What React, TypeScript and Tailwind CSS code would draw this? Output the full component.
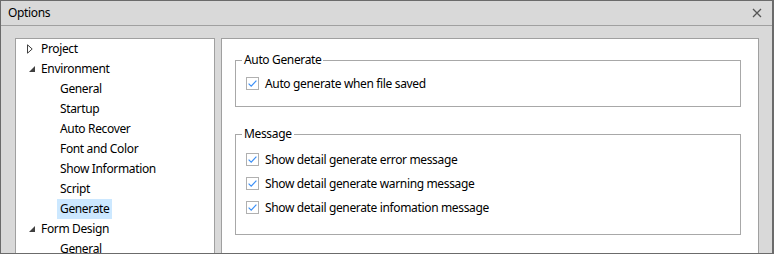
import React from "react";

const tree: { label: string; level: 0 | 1; state?: "collapsed" | "expanded"; selected?: boolean }[] = [
  { label: "Project", level: 0, state: "collapsed" },
  { label: "Environment", level: 0, state: "expanded" },
  { label: "General", level: 1 },
  { label: "Startup", level: 1 },
  { label: "Auto Recover", level: 1 },
  { label: "Font and Color", level: 1 },
  { label: "Show Information", level: 1 },
  { label: "Script", level: 1 },
  { label: "Generate", level: 1, selected: true },
  { label: "Form Design", level: 0, state: "expanded" },
  { label: "General", level: 1 },
  { label: "Layout", level: 1 },
];

function Arrow({ state }: { state: "collapsed" | "expanded" }) {
  if (state === "collapsed") {
    return (
      <svg width="6" height="10" viewBox="0 0 6 10" className="block">
        <path d="M0.5 0.8 L5.2 5 L0.5 9.2 Z" fill="none" stroke="#404040" strokeWidth="1" />
      </svg>
    );
  }
  return (
    <svg width="6" height="6" viewBox="0 0 6 6" className="block">
      <path d="M6 0 L6 6 L0 6 Z" fill="#404040" />
    </svg>
  );
}

function CheckBox() {
  return (
    <span className="w-[13px] h-[13px] shrink-0 border border-[#b0b0b0] bg-white flex items-center justify-center">
      <svg width="11" height="11" viewBox="0 0 11 11" className="block">
        <path d="M1.6 5.6 L4.2 8.2 L9.4 2.6" fill="none" stroke="#3b8ff6" strokeWidth="1.2" />
      </svg>
    </span>
  );
}

function CheckRow({ label }: { label: string }) {
  return (
    <div className="flex items-center h-[13px] pl-[10px]">
      <CheckBox />
      <span className="ml-[6px] leading-[16px] whitespace-nowrap">{label}</span>
    </div>
  );
}

function Group({ title, children, className }: { title: string; children: React.ReactNode; className: string }) {
  return (
    <div className={"relative border border-[#a8a8a8] " + className}>
      <span className="absolute -top-[9px] left-[6px] px-[2px] bg-white leading-[16px] whitespace-nowrap">{title}</span>
      {children}
    </div>
  );
}

export default function App() {
  return (
    <div className="w-[774px] h-[254px] overflow-hidden border-l border-t border-b border-r-2 border-[#6b6b6b] bg-[#d9d9d9] flex flex-col font-['Noto_Sans',sans-serif] text-[12px] tracking-[-0.35px] text-black">
      <div className="h-[25px] shrink-0 border-b border-[#a0a0a0] flex items-center justify-between pl-[7px] pr-[10px]">
        <span className="leading-[16px]">Options</span>
        <svg width="10" height="10" viewBox="0 0 10 10" className="block">
          <path d="M1 1 L9 9 M9 1 L1 9" stroke="#555" strokeWidth="1.3" />
        </svg>
      </div>
      <div className="flex-1 min-h-0 overflow-hidden flex pl-[14px] pt-[12px] gap-[6px]">
        <div className="w-[200px] h-[260px] shrink-0 bg-white border border-[#a0a0a0] flex flex-col">
          {tree.map((item, i) => (
            <div key={i} className="h-[20px] shrink-0 flex items-center">
              {item.level === 0 ? (
                <>
                  <span className="w-[25px] pl-[10px] flex items-center">
                    {item.state === "collapsed" ? (
                      <span className="pl-[1px]"><Arrow state="collapsed" /></span>
                    ) : (
                      <span className="pl-[3px]"><Arrow state="expanded" /></span>
                    )}
                  </span>
                  <span className="leading-[16px] whitespace-nowrap">{item.label}</span>
                </>
              ) : (
                <span
                  className={
                    "ml-[41px] h-[20px] px-[3px] flex items-center whitespace-nowrap " +
                    (item.selected ? "bg-[#cce8ff]" : "")
                  }
                >
                  {item.label}
                </span>
              )}
            </div>
          ))}
        </div>
        <div className="w-[538px] h-[260px] shrink-0 bg-white border border-[#a0a0a0] pt-[21px] pl-[13px] pr-[17px] flex flex-col">
          <Group title="Auto Generate" className="pt-[16px] pb-[16px]">
            <CheckRow label="Auto generate when file saved" />
          </Group>
          <Group title="Message" className="mt-[27px] pt-[18px] pb-[20px] flex flex-col gap-[11px]">
            <CheckRow label="Show detail generate error message" />
            <CheckRow label="Show detail generate warning message" />
            <CheckRow label="Show detail generate infomation message" />
          </Group>
        </div>
      </div>
    </div>
  );
}
